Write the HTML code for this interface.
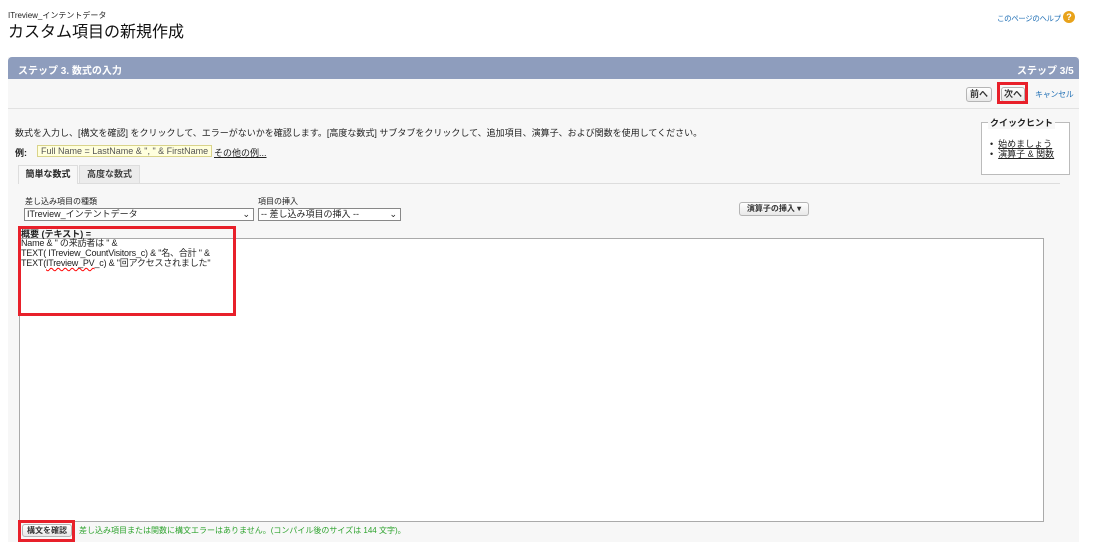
<!DOCTYPE html>
<html><head><meta charset="utf-8"><style>
*{box-sizing:border-box;margin:0;padding:0}
body{width:1093px;height:552px;background:#fff;font-family:"Liberation Sans","Noto Sans CJK JP",sans-serif;position:relative;overflow:hidden;color:#222}
.a{position:absolute;white-space:nowrap}
.btn{position:absolute;border:1px solid #b5b5b5;border-radius:3px;background:linear-gradient(#fff,#e8e8e8);font-size:9px;font-weight:bold;text-align:center;color:#333}
.red{position:absolute;border:3px solid #e8202a}
</style></head><body>
<div class="a" style="left:8px;top:10px;font-size:8px">ITreview_インテントデータ</div>
<div class="a" style="left:8px;top:18px;font-size:16px;color:#111">カスタム項目の新規作成</div>
<div class="a" style="left:997px;top:13px;font-size:7.5px;letter-spacing:-0.4px;color:#1f6fb5">このページのヘルプ</div>
<div class="a" style="left:1063px;top:11px;width:12px;height:12px;border-radius:50%;background:#e8a21a;color:#fff;font-size:9px;font-weight:bold;text-align:center;line-height:12px">?</div>

<div class="a" style="left:8px;top:57px;width:1071px;height:485px;background:#f7f7f7"></div>
<div class="a" style="left:8px;top:57px;width:1071px;height:22px;background:#8e9dbd;border-radius:4px 4px 0 0"></div>
<div class="a" style="left:18px;top:62px;font-size:10px;font-weight:bold;color:#fff">ステップ 3. 数式の入力</div>
<div class="a" style="left:1017px;top:62px;font-size:10px;font-weight:bold;color:#fff">ステップ 3/5</div>
<div class="a" style="left:8px;top:108px;width:1071px;height:1px;background:#e2e2e2"></div>
<div class="btn" style="left:966px;top:87px;width:26px;height:15px;line-height:13px">前へ</div>
<div class="btn" style="left:1001px;top:87px;width:24px;height:15px;line-height:13px">次へ</div>
<div class="red" style="left:997px;top:82px;width:31px;height:22px"></div>
<div class="a" style="left:1035px;top:89px;font-size:8px;letter-spacing:-0.3px;color:#1f6fb5">キャンセル</div>

<div class="a" style="left:15px;top:126px;font-size:9px">数式を入力し、[構文を確認] をクリックして、エラーがないかを確認します。[高度な数式] サブタブをクリックして、追加項目、演算子、および関数を使用してください。</div>
<div class="a" style="left:15px;top:146px;font-size:9px;font-weight:bold">例:</div>
<div class="a" style="left:37px;top:145px;height:12px;padding:0 3px;font-size:9px;line-height:11px;background:#ffffdd;border:1px solid #d9d38a;color:#555">Full Name = LastName &amp; ", " &amp; FirstName</div>
<div class="a" style="left:214px;top:146px;font-size:9px;text-decoration:underline">その他の例...</div>

<div class="a" style="left:981px;top:122px;width:89px;height:53px;border:1px solid #bbb;background:#fff"></div>
<div class="a" style="left:988px;top:116px;font-size:9px;font-weight:bold;background:#f7f7f7;padding:0 2px">クイックヒント</div>
<div class="a" style="left:990px;top:139px;font-size:9px;line-height:10px">•&nbsp;&nbsp;<u>始めましょう</u><br>•&nbsp;&nbsp;<u>演算子 &amp; 関数</u></div>

<div class="a" style="left:18px;top:183px;width:1042px;height:1px;background:#ddd"></div>
<div class="a" style="left:18px;top:165px;width:60px;height:19px;background:#f7f7f7;border:1px solid #ddd;border-bottom:none;font-size:9px;font-weight:bold;text-align:center;line-height:17px">簡単な数式</div>
<div class="a" style="left:79px;top:165px;width:61px;height:18px;background:#ececec;border:1px solid #ddd;border-bottom:none;font-size:9px;font-weight:bold;text-align:center;line-height:17px;color:#444">高度な数式</div>

<div class="a" style="left:25px;top:196px;font-size:8px">差し込み項目の種類</div>
<div class="a" style="left:258px;top:196px;font-size:8px">項目の挿入</div>
<div class="a" style="left:24px;top:208px;width:230px;height:13px;border:1px solid #888;background:#fff;font-size:9px;line-height:11px;padding-left:2px">ITreview_インテントデータ<span style="position:absolute;right:3px">⌄</span></div>
<div class="a" style="left:258px;top:208px;width:143px;height:13px;border:1px solid #888;background:#fff;font-size:9px;line-height:11px;padding-left:2px">-- 差し込み項目の挿入 --<span style="position:absolute;right:3px">⌄</span></div>
<div class="btn" style="left:739px;top:202px;width:70px;height:14px;line-height:12px;font-size:8px">演算子の挿入 ▾</div>

<div class="a" style="left:19px;top:238px;width:1025px;height:284px;background:#fff;border:1px solid #aaa"></div>
<div class="a" style="left:21px;top:227px;font-size:9px;font-weight:bold">概要 (テキスト) =</div>
<div class="a" style="left:21px;top:238px;font-size:9px;line-height:10px;letter-spacing:-0.2px">Name &amp; " の来訪者は " &amp;<br>TEXT( ITreview_CountVisitors_c) &amp; "名、合計 " &amp;<br>TEXT(<span style="text-decoration:underline wavy red">ITreview_PV</span>_c) &amp; "回アクセスされました"</div>
<div class="red" style="left:18px;top:226px;width:218px;height:90px"></div>

<div class="btn" style="left:22px;top:524px;width:50px;height:13px;line-height:11px;font-size:8px">構文を確認</div>
<div class="red" style="left:18px;top:520px;width:57px;height:22px"></div>
<div class="a" style="left:79px;top:525px;font-size:8px;color:#2ea32e">差し込み項目または関数に構文エラーはありません。(コンパイル後のサイズは 144 文字)。</div>
</body></html>
